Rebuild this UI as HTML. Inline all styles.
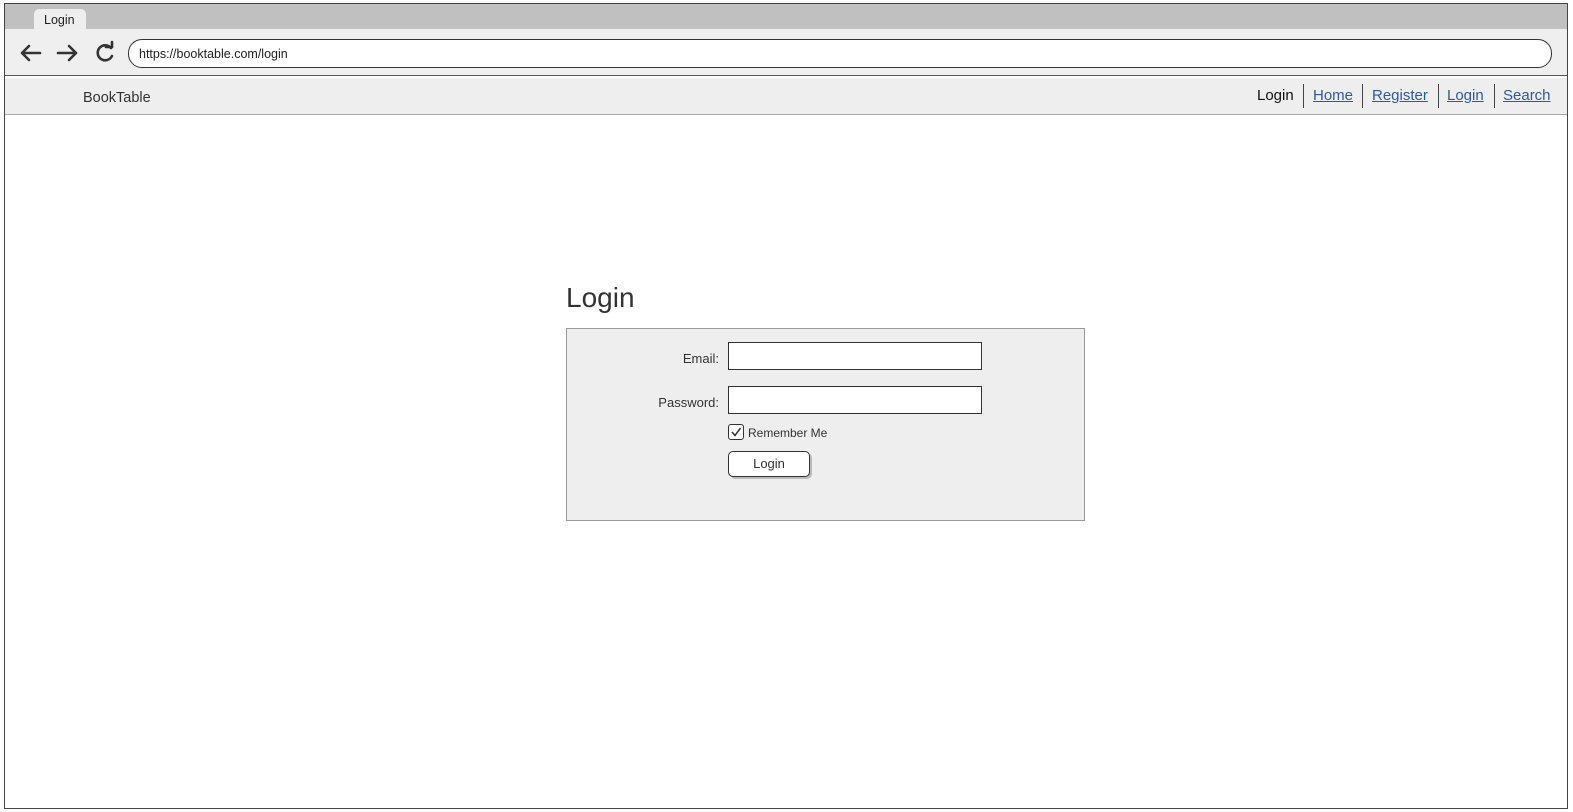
<!DOCTYPE html>
<html><head><meta charset="utf-8"><style>
*{box-sizing:border-box;margin:0;padding:0}
body{width:1573px;height:812px;background:#fff;font-family:"Liberation Sans",sans-serif;color:#333;position:relative;overflow:hidden}
.abs{position:absolute}
a{color:#2b5aa3;text-decoration:underline}
.nv{position:absolute;top:87px;font-size:15px}
.sep{position:absolute;top:84px;height:24px;border-left:1.5px solid #444}
</style></head><body>
<div class="abs" style="left:4px;top:3px;width:1564px;height:806px;border:1.5px solid #444;"></div>
<div class="abs" style="left:5px;top:4px;width:1562px;height:25px;background:#c0c0c0"></div>
<div class="abs" style="left:34px;top:9px;width:52px;height:21px;background:#eee;border-radius:5px 5px 0 0;font-size:12.5px;padding:4px 0 0 10px;color:#222">Login</div>
<div class="abs" style="left:5px;top:29px;width:1562px;height:47px;background:#efefef;border-bottom:1.5px solid #555"></div>
<svg class="abs" style="left:18px;top:40px" width="100" height="26" viewBox="0 0 100 26" fill="none" stroke="#333" stroke-width="2.6" stroke-linecap="round" stroke-linejoin="round">
<path d="M4 13H22M4 13L11 6M4 13L11 20"/>
<path d="M40 13H58M58 13L51 6M58 13L51 20"/>
<path d="M93 8A7.5 7.5 0 1 0 94 16"/><path d="M88 7L94 7L94 2" />
</svg>
<div class="abs" style="left:128px;top:39px;width:1424px;height:29px;border:1.5px solid #333;border-radius:14px;background:#fff;font-size:12.5px;padding:7px 0 0 10px;color:#222">https://booktable.com/login</div>
<div class="abs" style="left:5px;top:78px;width:1562px;height:37px;background:#eee;border-bottom:1.5px solid #aaa"></div>
<div class="abs" style="left:83px;top:90px;font-size:14.5px;color:#333">BookTable</div>
<span class="nv" style="left:1257px;color:#111">Login</span>
<span class="sep" style="left:1303px"></span>
<a class="nv" style="left:1313px">Home</a>
<span class="sep" style="left:1362px"></span>
<a class="nv" style="left:1372px">Register</a>
<span class="sep" style="left:1438px"></span>
<a class="nv" style="left:1447px">Login</a>
<span class="sep" style="left:1494px"></span>
<a class="nv" style="left:1503px">Search</a>
<div class="abs" style="left:566px;top:282px;font-size:28px;color:#333">Login</div>
<div class="abs" style="left:566px;top:328px;width:519px;height:193px;background:#eee;border:1.5px solid #999"></div>
<div class="abs" style="left:600px;top:351px;width:119px;text-align:right;font-size:13px">Email:</div>
<div class="abs" style="left:600px;top:395px;width:119px;text-align:right;font-size:13px">Password:</div>
<div class="abs" style="left:728px;top:342px;width:254px;height:28px;background:#fff;border:1.5px solid #333"></div>
<div class="abs" style="left:728px;top:386px;width:254px;height:28px;background:#fff;border:1.5px solid #333"></div>
<div class="abs" style="left:728px;top:424px;width:16px;height:16px;border:1.5px solid #333;border-radius:3px;background:#fff"></div>
<svg class="abs" style="left:728px;top:424px" width="16" height="16"><path d="M4 8L7 11.5L12.5 4" fill="none" stroke="#333" stroke-width="1.5"/></svg>
<div class="abs" style="left:748px;top:426px;font-size:12px">Remember Me</div>
<div class="abs" style="left:728px;top:451px;width:82px;height:26px;border:1.5px solid #333;border-radius:5px;background:#fff;box-shadow:2px 2px 0 #bbb;text-align:center;font-size:13px;padding-top:4px">Login</div>
</body></html>
